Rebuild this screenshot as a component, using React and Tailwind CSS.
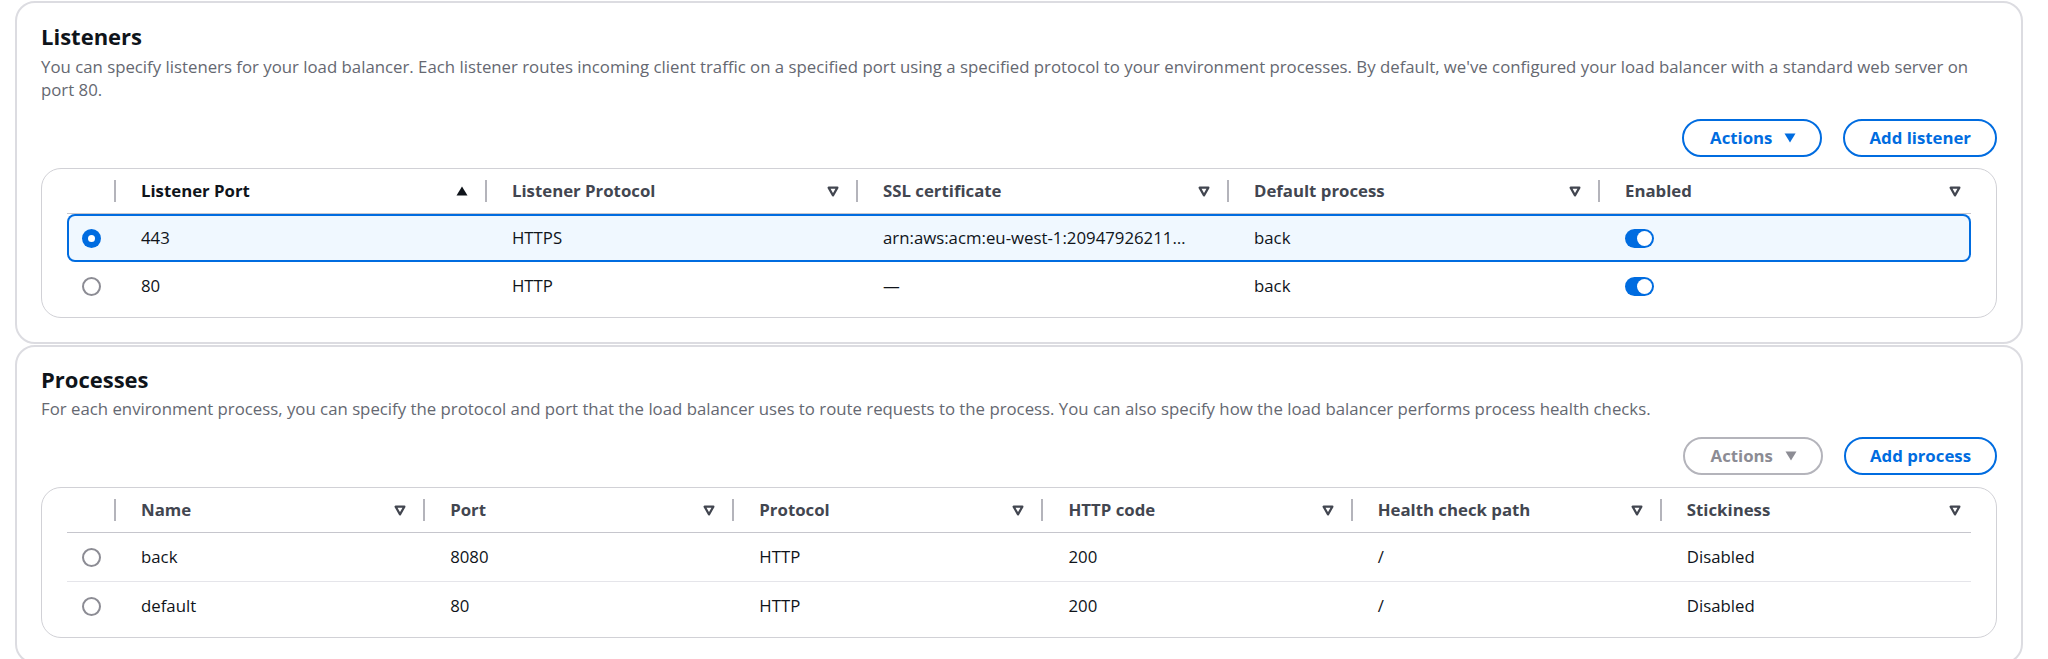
import React from "react";

const BLUE = "#006ce0";

function SortUp() {
  return (
    <svg width="12" height="10" viewBox="0 0 12 10" className="shrink-0">
      <path d="M6 0.5 L11.5 9.5 H0.5 Z" fill="#0f141a" />
    </svg>
  );
}

function SortNone() {
  return (
    <svg width="12" height="11" viewBox="0 0 12 11" className="shrink-0">
      <path
        d="M1.6 1.6 H10.4 L6 9.4 Z"
        fill="none"
        stroke="#424650"
        strokeWidth="2.2"
        strokeLinejoin="round"
      />
    </svg>
  );
}

function Caret({ color }) {
  return (
    <svg width="12" height="10" viewBox="0 0 12 10" className="shrink-0">
      <path d="M0.5 0.5 H11.5 L6 9.5 Z" fill={color} />
    </svg>
  );
}

function Radio({ checked }) {
  if (checked) {
    return (
      <div className="w-[19px] h-[19px] rounded-full bg-[#006ce0] flex items-center justify-center">
        <div className="w-[7px] h-[7px] rounded-full bg-white" />
      </div>
    );
  }
  return <div className="w-[19px] h-[19px] rounded-full border-2 border-[#8c8c94] bg-white" />;
}

function Toggle() {
  return (
    <div className="w-[29px] h-[19px] rounded-full bg-[#006ce0] flex items-center justify-end pr-[2px]">
      <div className="w-[15px] h-[15px] rounded-full bg-white" />
    </div>
  );
}

function Divider() {
  return <div className="w-[2px] h-[22px] bg-[#b4b4bb] shrink-0" />;
}

function HeaderCell({ label, sorted, last }) {
  return (
    <div className={"flex items-center h-full pl-[25px] " + (last ? "pr-[10px]" : "")}>
      <span
        className={
          "font-bold whitespace-nowrap " + (sorted ? "text-[#0f141a]" : "text-[#424650]")
        }
      >
        {label}
      </span>
      <div className="flex-1" />
      {sorted ? <SortUp /> : <SortNone />}
      {!last && (
        <div className="ml-[17px]">
          <Divider />
        </div>
      )}
    </div>
  );
}

function Button({ children, disabled, caret }) {
  const color = disabled ? "text-[#8c8c94] border-[#b4b4bb]" : "text-[#006ce0] border-[#006ce0]";
  return (
    <div
      className={
        "flex items-center border-2 rounded-full bg-white font-bold leading-[24px] py-[5px] " +
        color +
        (caret ? " pl-[26px] pr-[24px] gap-[12px]" : " px-[24px]")
      }
    >
      <span className="whitespace-nowrap">{children}</span>
      {caret && <Caret color={disabled ? "#8c8c94" : BLUE} />}
    </div>
  );
}

function Table({ cols, gridClass, rows, selectedIndex, dividerRows }) {
  return (
    <div className="border border-[#d1d1d6] rounded-[20px] px-[25px] pb-[7px] bg-white">
      <div className={"grid h-[45px] border-b border-[#c6c6cd] " + gridClass}>
        <div className="flex items-center justify-end h-full">
          <Divider />
        </div>
        {cols.map((c, i) => (
          <HeaderCell key={c.label} label={c.label} sorted={c.sorted} last={i === cols.length - 1} />
        ))}
      </div>
      {rows.map((r, ri) => {
        const selected = ri === selectedIndex;
        const divider = dividerRows && ri > 0;
        return (
          <div
            key={ri}
            className={
              "grid h-[48px] items-center " +
              gridClass +
              (selected
                ? " bg-[#f0f8ff] rounded-[8px] shadow-[inset_0_0_0_2px_#006ce0]"
                : "") +
              (divider ? " border-t border-[#e5e5ea] h-[49px]" : "")
            }
          >
            <div className="flex items-center pl-[15px]">
              <Radio checked={selected} />
            </div>
            {r.map((cell, ci) => (
              <div key={ci} className="pl-[25px] whitespace-nowrap text-[#0f141a] flex items-center">
                {cell === "__toggle__" ? <Toggle /> : cell}
              </div>
            ))}
          </div>
        );
      })}
    </div>
  );
}

export default function App() {
  return (
    <div className="bg-white min-h-[659px] pl-[15px] pr-[25px] pt-[1px] font-['Open_Sans',sans-serif] text-[16.8px] leading-[24px]">
      {/* Listeners */}
      <div className="border-2 border-[#dcdce1] rounded-[20px] px-[24px] pt-[20px] pb-[24px] bg-white">
        <h2 className="text-[22px] leading-[26px] font-bold text-[#0f141a]">Listeners</h2>
        <p className="mt-[6px] leading-[23px] text-[#656871]">
          You can specify listeners for your load balancer. Each listener routes incoming client traffic on a
          specified port using a specified protocol to your environment processes. By default, we've configured
          your load balancer with a standard web server on
          <br />
          port 80.
        </p>
        <div className="mt-[18px] flex justify-end gap-[21px]">
          <Button caret>Actions</Button>
          <Button>Add listener</Button>
        </div>
        <div className="mt-[11px]">
          <Table
            gridClass="grid-cols-[49px_repeat(5,minmax(0,1fr))]"
            cols={[
              { label: "Listener Port", sorted: true },
              { label: "Listener Protocol" },
              { label: "SSL certificate" },
              { label: "Default process" },
              { label: "Enabled" },
            ]}
            rows={[
              ["443", "HTTPS", "arn:aws:acm:eu-west-1:20947926211…", "back", "__toggle__"],
              ["80", "HTTP", "—", "back", "__toggle__"],
            ]}
            selectedIndex={0}
            dividerRows={false}
          />
        </div>
      </div>

      {/* Processes */}
      <div className="mt-[1px] border-2 border-[#dcdce1] rounded-[20px] px-[24px] pt-[19px] pb-[24px] bg-white">
        <h2 className="text-[22px] leading-[26px] font-bold text-[#0f141a]">Processes</h2>
        <p className="mt-[5px] leading-[23px] text-[#656871]">
          For each environment process, you can specify the protocol and port that the load balancer uses to route
          requests to the process. You can also specify how the load balancer performs process health checks.
        </p>
        <div className="mt-[17px] flex justify-end gap-[21px]">
          <Button caret disabled>
            Actions
          </Button>
          <Button>Add process</Button>
        </div>
        <div className="mt-[12px]">
          <Table
            gridClass="grid-cols-[49px_repeat(6,minmax(0,1fr))]"
            cols={[
              { label: "Name" },
              { label: "Port" },
              { label: "Protocol" },
              { label: "HTTP code" },
              { label: "Health check path" },
              { label: "Stickiness" },
            ]}
            rows={[
              ["back", "8080", "HTTP", "200", "/", "Disabled"],
              ["default", "80", "HTTP", "200", "/", "Disabled"],
            ]}
            selectedIndex={-1}
            dividerRows={true}
          />
        </div>
      </div>
    </div>
  );
}
